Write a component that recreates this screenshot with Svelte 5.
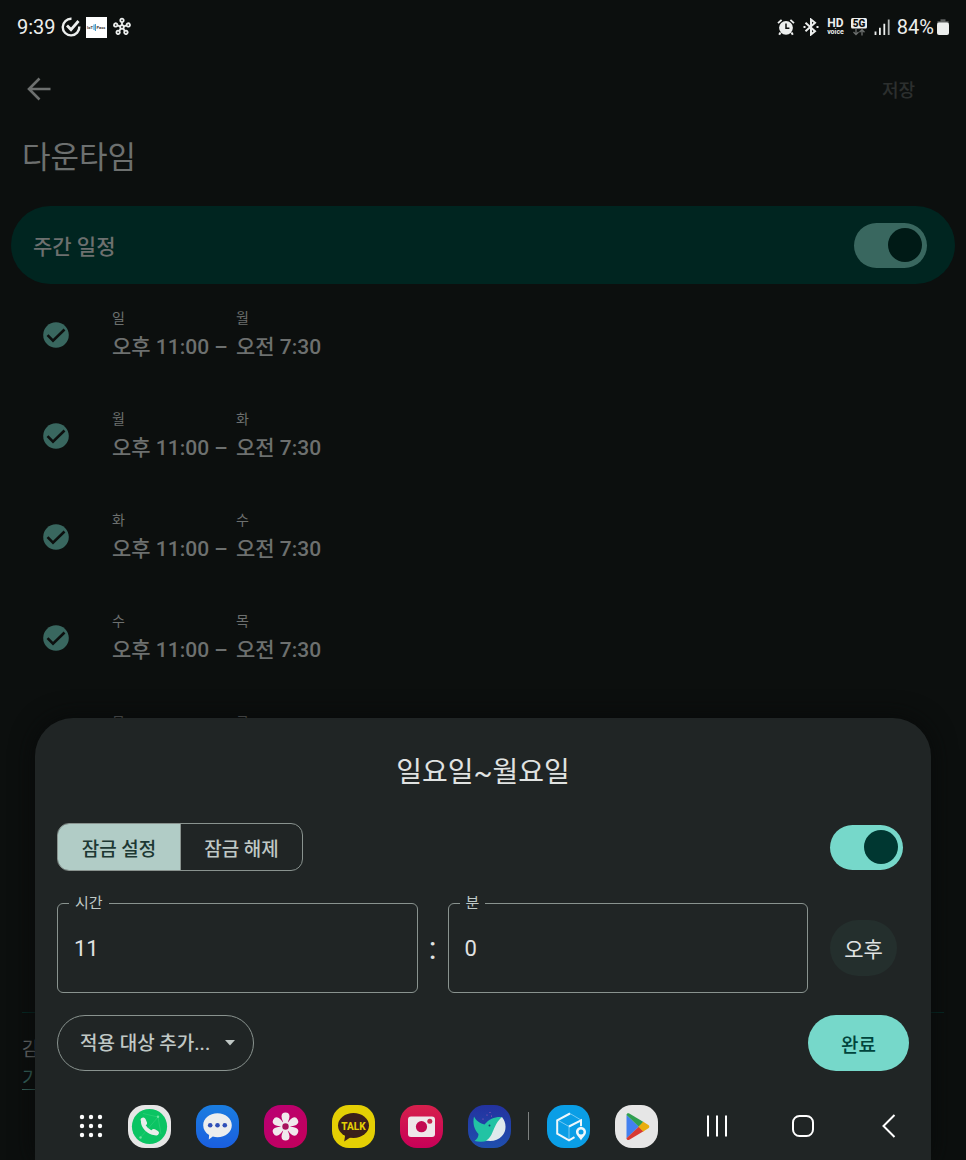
<script lang="ts">
  type Schedule = {
    from: string;
    to: string;
    start: string;
    end: string;
  };

  const days = ['일', '월', '화', '수', '목', '금'];

  const schedules: Schedule[] = days.slice(0, -1).map((day, i) => ({
    from: day,
    to: days[i + 1],
    start: '오후 11:00',
    end: '오전 7:30',
  }));

  const petals = [0, 60, 120, 180, 240, 300];
  const atoms = [0, 72, 144, 216, 288];
  const dots = [3, 12, 21];

  let weekly = $state(true);
  let enabled = $state(true);
  let mode = $state('lock');
  let hour = $state('11');
  let minute = $state('0');
  let pm = $state(true);
</script>

<div class="screen">
  <header class="status">
    <div class="status-group left">
      <span class="status-text">9:39</span>
      <svg class="i20" viewBox="0 0 20 20" fill="none" stroke="#eceeed" stroke-width="2.4">
        <path d="M10.5 1.8A8.3 8.3 0 1 0 18.3 9.5" />
        <path d="M6 8.6l4 4L17.5 4" stroke-width="2.8" />
      </svg>
      <svg class="i21" viewBox="0 0 21 21">
        <rect width="21" height="21" fill="#fff" />
        <text x="1" y="12" class="pass-logo">IoT</text>
        <path d="M8 7.5v5.5M9.4 7v7" stroke="#2f8fc4" />
        <text x="10.5" y="12" class="pass-logo">Pass</text>
      </svg>
      <svg class="i20" viewBox="-10 -10 20 20" fill="none" stroke="#eceeed" stroke-width="1.8">
        <circle r="1.8" />
        {#each atoms as angle}
          <g transform={`rotate(${angle})`}>
            <path d="M0-2v-2.8" />
            <circle cy="-6.6" r="1.7" />
          </g>
        {/each}
      </svg>
    </div>
    <div class="status-group right">
      <svg class="i18" viewBox="0 0 18 18">
        <circle cx="9" cy="9.8" r="6.9" fill="#eceeed" />
        <path d="M3.5 14.5l-1.3 2.3M14.5 14.5l1.3 2.3" stroke="#eceeed" stroke-width="2" />
        <path d="M1 5.2L4.6 1.8M17 5.2l-3.6-3.4" stroke="#eceeed" stroke-width="1.8" />
        <path d="M9 5.6v4.6h3.4" fill="none" stroke="#0c0f0e" stroke-width="1.5" />
      </svg>
      <svg class="i18" viewBox="0 0 18 18" fill="none" stroke="#eceeed" stroke-width="2">
        <path d="M3.5 4.8l9.5 8.4L9 16.5v-15l4 3.3-9.5 8.4" />
        <path d="M1.500 9h2M14.500 9h2" />
      </svg>
      <span class="hd"><b>HD</b><small>voice</small></span>
      <svg class="fiveg" viewBox="0 0 16 18">
        <rect width="16" height="10.5" rx="1.5" fill="#eceeed" />
        <text x="8" y="8.8" text-anchor="middle" class="fiveg-text">5G</text>
        <path d="M5 11v5.5M2.5 14L5 16.6 7.5 14M11 17.5V12M8.5 14.2L11 11.7l2.5 2.5" fill="none" stroke="#6c6f6e" stroke-width="1.3" />
      </svg>
      <svg class="signal" viewBox="0 0 16 18" stroke="#eceeed" stroke-width="1.8">
        <path d="M1.5 17v-3.5M5.9 17V9.8M10.3 17V5.8" />
        <path d="M14.7 17V1.5" stroke="#b4b7b6" />
      </svg>
      <span class="status-text">84%</span>
      <svg class="battery" viewBox="0 0 12 18">
        <path d="M3.5 1.2h5v2h3.1V6H.4V3.2h3.1z" fill="#5b5e5d" />
        <rect y="4.5" width="12" height="12.5" rx="2" fill="#eceeed" />
      </svg>
    </div>
  </header>

  <main>
    <div class="toolbar">
      <button class="back" aria-label="뒤로">
        <svg viewBox="0 0 24 24" fill="none" stroke="#6d706f" stroke-width="2.6">
          <path d="M23.5 12H2.5M12.5 1.5L2 12l10.5 10.5" />
        </svg>
      </button>
      <button class="save" disabled>저장</button>
    </div>

    <h1>다운타임</h1>

    <label class="banner">
      <span>주간 일정</span>
      <input type="checkbox" role="switch" class="switch dim" bind:checked={weekly} />
    </label>

    <ul class="schedules">
      {#each schedules as item}
        <li>
          <svg class="check" viewBox="0 0 26 26">
            <circle cx="13" cy="13" r="12.8" fill="#39675f" />
            <path d="M4.5 13.2l5.5 5.5L21.5 7.5" fill="none" stroke="#0c0f0e" stroke-width="2.6" />
          </svg>
          <div class="range">
            <span class="day">{item.from}</span>
            <span class="day">{item.to}</span>
            <span class="time">{item.start} –</span>
            <span class="time">{item.end}</span>
          </div>
        </li>
      {/each}
    </ul>

    <footer>
      <p>감</p>
      <a href="#more">기</a>
    </footer>
  </main>

  <section class="sheet">
    <h2>일요일~월요일</h2>

    <div class="row modes">
      <div class="segmented">
        <button class:active={mode === 'lock'} onclick={() => (mode = 'lock')}>잠금 설정</button>
        <button class:active={mode === 'unlock'} onclick={() => (mode = 'unlock')}>잠금 해제</button>
      </div>
      <input type="checkbox" role="switch" class="switch" aria-label="일정 사용" bind:checked={enabled} />
    </div>

    <div class="row clock">
      <div class="field">
        <label for="hour">시간</label>
        <input id="hour" type="text" inputmode="numeric" bind:value={hour} />
      </div>
      <span class="colon">:</span>
      <div class="field">
        <label for="minute">분</label>
        <input id="minute" type="text" inputmode="numeric" bind:value={minute} />
      </div>
      <button class="meridiem" onclick={() => (pm = !pm)}>{pm ? '오후' : '오전'}</button>
    </div>

    <div class="row actions">
      <div class="target">
        <select aria-label="적용 대상 추가">
          <option>적용 대상 추가...</option>
        </select>
        <svg viewBox="0 0 10 6"><path d="M0 0h10L5 5.5z" fill="#c0c8c5" /></svg>
      </div>
      <button class="done">완료</button>
    </div>

    <nav class="taskbar">
      <button class="key" aria-label="앱 목록">
        <svg viewBox="0 0 24 24" fill="#fff">
          {#each dots as y}
            {#each dots as x}
              <circle cx={x} cy={y} r="2.2" />
            {/each}
          {/each}
        </svg>
      </button>

      <div class="apps">
        <button class="app phone" aria-label="전화">
          <svg viewBox="0 0 43 43">
            <circle cx="21.5" cy="21.5" r="17.6" fill="#0bc463" />
            <path d="M15 8.5l15 3.5 3 17M30 12L12 33" fill="none" stroke="#3fd582" stroke-width=".5" />
            <circle cx="30" cy="11.8" r="1.2" fill="#6fe09f" />
            <circle cx="12.5" cy="32.5" r="1.2" fill="#6fe09f" />
            <g fill="none" stroke="#e9edea" stroke-linecap="round">
              <path d="M14.8 16.5C15 22 20 27.5 27 28.3" stroke-width="3.8" />
              <path d="M15.2 15l1.3 3M25.800 26.600l2.600 1.300" stroke-width="5" />
            </g>
          </svg>
        </button>
        <button class="app message" aria-label="메시지">
          <svg viewBox="0 0 43 43">
            <path d="M21.5 8.3c8 0 14.3 5.3 14.3 12s-6.3 12-14.3 12c-1.6 0-3.2-.2-4.7-.7L12.8 34.5l.3-4.4C9.500 27.900 7.200 24.400 7.200 20.300c0-6.700 6.300-12 14.300-12z" fill="#eceeee" />
            <g fill="#2f50b8">
              <circle cx="14.2" cy="20.3" r="2.3" />
              <circle cx="21.5" cy="20.3" r="2.3" />
              <circle cx="28.8" cy="20.3" r="2.3" />
            </g>
          </svg>
        </button>
        <button class="app gallery" aria-label="갤러리">
          <svg viewBox="0 0 43 43">
            <g transform="translate(21.5 21.5)" fill="#f0e9ec">
              {#each petals as angle}
                <path transform={`rotate(${angle})`} d="M0 0C-1.8-3.5-4-7-4-10a4 4 0 0 1 8 0C4-7 1.8-3.5 0 0z" />
              {/each}
              <circle r="5" />
              <circle r="3.2" fill="#a8125c" />
            </g>
          </svg>
        </button>
        <button class="app talk" aria-label="카카오톡">
          <svg viewBox="0 0 43 43">
            <ellipse cx="21.5" cy="20.5" rx="15.5" ry="12.5" fill="#3a1f1a" />
            <path d="M13.5 28l-1.3 8.5 7.5-5z" fill="#3a1f1a" />
            <text x="21.5" y="24.5" text-anchor="middle" class="talk-text">TALK</text>
          </svg>
        </button>
        <button class="app camera" aria-label="카메라">
          <svg viewBox="0 0 43 43">
            <rect x="8" y="11.5" width="27" height="20.5" rx="3" fill="#eee8ea" />
            <circle cx="21.5" cy="21.7" r="5.6" fill="#c30a52" />
            <circle cx="29.8" cy="16.3" r="2.5" fill="#c9264f" />
          </svg>
        </button>
        <button class="app whale" aria-label="웨일">
          <svg viewBox="0 0 43 43">
            <path d="M6 11.5C4.5 18 6 24.5 10.500 29c0 3-1.500 5-4 7 6 1.500 14 1 18.500-3.500C27 27 28 18 34 12c-7-.5-12.500 1.500-17.500 7.500C12.500 18.500 8 16 6 11.500z" fill="#22c3a4" />
            <path d="M34 12c4.500 5.500 5 14 0 19-4 4.300-10 5.800-16 4.500 8-4 6.500-15.500 16-23.500z" fill="#dfe9ec" />
            <circle cx="21.5" cy="20.5" r="1" fill="#17406f" />
            <g fill="#a95bb8">
              <circle cx="15" cy="14" r=".6" />
              <circle cx="19" cy="10" r=".6" />
              <circle cx="22" cy="7.5" r=".6" />
              <circle cx="23.5" cy="11" r=".6" />
            </g>
          </svg>
        </button>
      </div>

      <span class="divider"></span>

      <div class="apps">
        <button class="app parcel" aria-label="택배 조회">
          <svg viewBox="0 0 43 43" fill="none">
            <path d="M22 21.5V34M10.5 15L22 21.5M23 8.5L34 15" stroke="#8fd3f5" stroke-width=".8" />
            <path d="M23 8.5L10.2 15.3v13.4L22 35.3l5.5-3.2M22 21.5l12-6.2v6" stroke="#eef7fb" stroke-width="2" />
            <path d="M34 22c-3 0-5 2.200-5 5 0 3.300 3.500 5 5 8.500 1.500-3.500 5-5.200 5-8.500 0-2.800-2-5-5-5z" fill="#eef7fb" />
            <circle cx="34" cy="27" r="2.5" fill="#0a9ee6" />
          </svg>
        </button>
        <button class="app store" aria-label="Play 스토어">
          <svg viewBox="0 0 43 43">
            <path d="M11.5 10v23.5L24 21.6z" fill="#4280ef" />
            <path d="M11.5 10c0-1.5 1.5-2.2 2.8-1.5L28.5 17 24 21.8z" fill="#2f9e4f" />
            <path d="M11.5 33.3c0 1.5 1.5 2.2 2.8 1.5l14.2-8.5-4.5-4.7z" fill="#d83a32" />
            <path d="M28.2 16.8l5.2 3.2c1.3.8 1.3 2.5 0 3.3l-5.2 3.2-4.8-4.8z" fill="#e9ad0c" />
          </svg>
        </button>
      </div>

      <div class="keys">
        <button class="key" aria-label="최근 앱">
          <svg viewBox="0 0 24 24" stroke="#fff" stroke-width="2"><path d="M3 1.5v21M12 1.5v21M21 1.5v21" /></svg>
        </button>
        <button class="key" aria-label="홈">
          <svg viewBox="0 0 24 24" fill="none" stroke="#fff" stroke-width="2"><rect x="2" y="2" width="20" height="20" rx="6.5" /></svg>
        </button>
        <button class="key" aria-label="뒤로 가기">
          <svg viewBox="0 0 24 24" fill="none" stroke="#fff" stroke-width="2"><path d="M17.5 1L6.5 12l11 11" /></svg>
        </button>
      </div>
    </nav>
  </section>
</div>

<style>
  :global(body) {
    background: #0c0f0e;
  }
  .screen {
    position: relative;
    display: flex;
    flex-direction: column;
    height: 100vh;
    overflow: hidden;
    background: #0c0f0e;
    color: #6d706f;
    font-family: Roboto, 'Noto Sans CJK KR', sans-serif;
  }
  button,
  input,
  select {
    font: inherit;
    color: inherit;
    margin: 0;
    padding: 0;
    border: 0;
    background: none;
  }
  svg {
    display: block;
    flex: none;
  }

  /* status bar */
  .status {
    display: flex;
    justify-content: space-between;
    height: 54px;
    padding: 0 17px;
    color: #eceeed;
  }
  .status-group {
    display: flex;
    align-items: center;
    gap: 5px;
  }
  .right {
    gap: 7px;
  }
  .right .status-text {
    margin-right: -4px;
  }
  .status-text {
    font-size: 20px;
    line-height: 24px;
  }
  .i18 {
    width: 18px;
    height: 18px;
  }
  .i20 {
    width: 20px;
    height: 20px;
  }
  .i21 {
    width: 21px;
    height: 21px;
  }
  .fiveg,
  .signal {
    width: 16px;
    height: 18px;
  }
  .battery {
    width: 12px;
    height: 18px;
  }
  .pass-logo {
    font-size: 4px;
    font-weight: 700;
    fill: #333;
  }
  .fiveg-text {
    font-size: 10px;
    font-weight: 900;
    fill: #0c0f0e;
  }
  .hd {
    display: flex;
    flex-direction: column;
    align-items: center;
  }
  .hd b {
    font-size: 12px;
    line-height: 9px;
  }
  .hd small {
    font-size: 7px;
    font-weight: 700;
    line-height: 8px;
  }

  /* page behind the sheet */
  main {
    display: flex;
    flex: 1;
    flex-direction: column;
  }
  .toolbar {
    display: flex;
    justify-content: space-between;
    align-items: center;
    height: 70px;
    padding: 0 51px 0 27px;
  }
  .back svg {
    width: 24px;
    height: 24px;
  }
  .save {
    font-size: 18px;
    font-weight: 500;
    color: #2c2f2e;
  }
  h1 {
    margin: 11px 22px 26px;
    font-size: 31px;
    font-weight: 400;
    line-height: 45px;
  }
  .banner {
    display: flex;
    justify-content: space-between;
    align-items: center;
    height: 78px;
    margin: 0 11px;
    padding: 0 28px 0 22px;
    border-radius: 39px;
    background: #002520;
    font-size: 21px;
    font-weight: 500;
  }
  .switch {
    appearance: none;
    display: flex;
    align-items: center;
    width: 73px;
    height: 45px;
    padding: 0 5px;
    border-radius: 23px;
    background: #76d8ca;
    box-sizing: border-box;
  }
  .switch::before {
    content: '';
    width: 34px;
    height: 34px;
    border-radius: 50%;
    background: #003731;
  }
  .switch:checked::before {
    margin-left: auto;
  }
  .dim {
    background: #39675f;
  }
  .dim::before {
    background: #001a16;
  }
  .schedules {
    margin: 0;
    padding: 0;
    list-style: none;
  }
  li {
    display: flex;
    align-items: center;
    gap: 43px;
    height: 101px;
    padding-left: 43px;
  }
  .check {
    width: 26px;
    height: 26px;
  }
  .range {
    display: grid;
    grid-template-columns: 124px 1fr;
    row-gap: 2px;
    padding-bottom: 4px;
  }
  .day {
    font-size: 14px;
    line-height: 26px;
  }
  .time {
    font-size: 21px;
    font-weight: 500;
    line-height: 28px;
    white-space: nowrap;
  }
  footer {
    margin: auto 22px 0;
    padding: 22px 0 67px;
    border-top: 1px solid #062a25;
    font-size: 19px;
    line-height: 29px;
  }
  footer p {
    margin: 0;
  }
  footer a {
    color: #39675f;
    text-underline-offset: 4px;
  }

  /* time sheet */
  .sheet {
    position: absolute;
    left: 35px;
    right: 35px;
    bottom: 0;
    padding: 34px 22px 0;
    border-radius: 38px 38px 0 0;
    background: #202525;
    color: #e0e3e2;
    box-shadow: 0 0 24px #080a0a;
  }
  h2 {
    margin: 0;
    font-size: 28px;
    font-weight: 400;
    line-height: 42px;
    text-align: center;
  }
  .row {
    display: flex;
    align-items: center;
  }
  .modes {
    justify-content: space-between;
    margin-top: 29px;
    padding-right: 6px;
  }
  .segmented {
    display: flex;
    border: 1px solid #89938f;
    border-radius: 12px;
    overflow: hidden;
  }
  .segmented button {
    width: 122px;
    height: 46px;
    font-size: 19px;
    font-weight: 500;
    color: #bfc8c5;
  }
  .segmented button + button {
    border-left: 1px solid #89938f;
  }
  .segmented .active {
    background: #b1ccc6;
    color: #1d3833;
  }
  .clock {
    margin-top: 32px;
    padding-right: 12px;
  }
  .field {
    position: relative;
    flex: 1;
  }
  .field input {
    width: 100%;
    height: 90px;
    padding: 0 16px;
    border: 1px solid #89938f;
    border-radius: 6px;
    box-sizing: border-box;
    font-size: 22px;
  }
  .field label {
    position: absolute;
    top: -11px;
    left: 12px;
    padding: 0 6px;
    background: #202525;
    color: #bfc8c5;
    font-size: 15px;
    line-height: 22px;
  }
  .colon {
    width: 30px;
    font-size: 32px;
    line-height: 36px;
    text-align: center;
  }
  .meridiem {
    width: 67px;
    height: 56px;
    margin-left: 22px;
    border-radius: 28px;
    background: #242f2d;
    font-size: 21px;
  }
  .actions {
    justify-content: space-between;
    margin-top: 22px;
  }
  .target {
    position: relative;
  }
  .target select {
    appearance: none;
    width: 197px;
    height: 56px;
    padding: 0 32px 0 22px;
    border: 1px solid #89938f;
    border-radius: 28px;
    color: #c0c8c5;
    font-size: 19px;
    font-weight: 500;
  }
  .target svg {
    position: absolute;
    top: 25px;
    right: 19px;
    width: 10px;
    height: 6px;
    pointer-events: none;
  }
  .done {
    width: 101px;
    height: 56px;
    border-radius: 28px;
    background: #76d8ca;
    color: #00443c;
    font-size: 19px;
    font-weight: 500;
  }

  /* system taskbar */
  .taskbar {
    display: flex;
    align-items: center;
    height: 68px;
    margin-top: 21px;
    padding: 0 8px 0 22px;
  }
  .key svg {
    width: 24px;
    height: 24px;
  }
  .apps {
    display: flex;
    gap: 25px;
  }
  .key + .apps {
    margin-left: 25px;
  }
  .divider {
    width: 1px;
    height: 28px;
    margin: 0 18px 0 17px;
    background: #7d8180;
  }
  .app {
    width: 43px;
    height: 43px;
    border-radius: 17px;
    overflow: hidden;
  }
  .keys {
    display: flex;
    gap: 62px;
    margin-left: auto;
  }
  .phone,
  .store {
    background: #e6e6e6;
  }
  .message {
    background: linear-gradient(#1a7de0, #1a5fe0);
  }
  .gallery {
    background: linear-gradient(135deg, #b80074, #c4005a);
  }
  .talk {
    background: #e4cf04;
  }
  .talk-text {
    font-size: 10px;
    font-weight: 800;
    fill: #e4cf04;
  }
  .camera {
    background: linear-gradient(#d6204c, #c80058);
  }
  .whale {
    background: linear-gradient(#2332a0, #1f4fae);
  }
  .parcel {
    background: #0a9ee6;
  }
</style>
